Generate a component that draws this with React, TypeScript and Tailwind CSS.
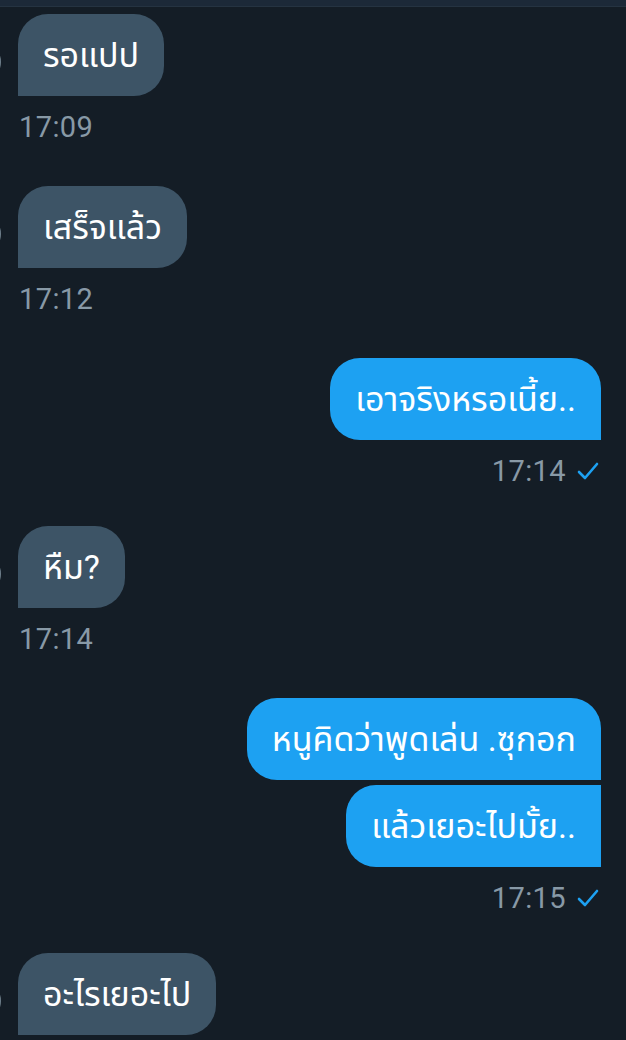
import React from "react";

type Msg = {
  side: "in" | "out";
  texts: string[];
  time: string;
};

const messages: Msg[] = [
  { side: "in", texts: ["รอแปป"], time: "17:09" },
  { side: "in", texts: ["เสร็จแล้ว"], time: "17:12" },
  { side: "out", texts: ["เอาจริงหรอเนี้ย.."], time: "17:14" },
  { side: "in", texts: ["หืม?"], time: "17:14" },
  { side: "out", texts: ["หนูคิดว่าพูดเล่น .ซุกอก", "แล้วเยอะไปมั้ย.."], time: "17:15" },
  { side: "in", texts: ["อะไรเยอะไป"], time: "" },
];

function Check() {
  return (
    <svg width="22" height="20" viewBox="0 0 22 20" fill="none">
      <path d="M2 11 L8 17 L20 3" stroke="#1da1f2" strokeWidth="2.6" strokeLinecap="round" strokeLinejoin="round" />
    </svg>
  );
}

function Group({ msg }: { msg: Msg }) {
  const out = msg.side === "out";
  return (
    <div className={out ? "flex flex-col items-end pr-[25px] mb-[-4px]" : "flex flex-col items-start"}>
      {msg.texts.map((t, i) => {
        const last = i === msg.texts.length - 1;
        const first = i === 0;
        let radius = "rounded-[30px] rounded-bl-none";
        if (out) {
          radius = first ? "rounded-[30px] rounded-br-none" : "rounded-[30px] rounded-tr-none rounded-br-none";
        }
        return (
          <div key={i} className={`flex items-end ${i > 0 ? "mt-[5px]" : ""}`}>
            {!out && last && (
              <div className="w-[40px] h-[40px] rounded-full bg-[#1b2631] border-2 border-[#6f7f8b] ml-[-39px] mr-[17px] mb-[14px] shrink-0" />
            )}
            <div
              className={`${radius} ${out ? "bg-[#1da1f2]" : "bg-[#3d5466]"} ${!out && !last ? "ml-[18px]" : ""} text-white text-[34px] leading-[40px] px-[25px] py-[21px] whitespace-nowrap`}
            >
              {t}
            </div>
          </div>
        );
      })}
      {msg.time && (
        <div className={`flex items-center gap-[11px] mt-[14px] text-[29px] tracking-[0.4px] leading-[34px] text-[#8899a6] ${out ? "mr-[2px]" : "ml-[19px]"}`}>
          <span>{msg.time}</span>
          {out && <Check />}
        </div>
      )}
    </div>
  );
}

export default function App() {
  return (
    <div
      className="w-[626px] h-[1040px] overflow-hidden bg-[#141d26] flex flex-col"
      style={{ fontFamily: "Roboto, 'Noto Sans Thai', 'Noto Sans', 'DejaVu Sans', sans-serif" }}
    >
      <div className="h-[7px] bg-[#1c2938] border-b border-[#253341] shrink-0" />
      <div className="flex flex-col gap-[42px] pt-[7px]">
        {messages.map((m, i) => (
          <Group key={i} msg={m} />
        ))}
      </div>
    </div>
  );
}
